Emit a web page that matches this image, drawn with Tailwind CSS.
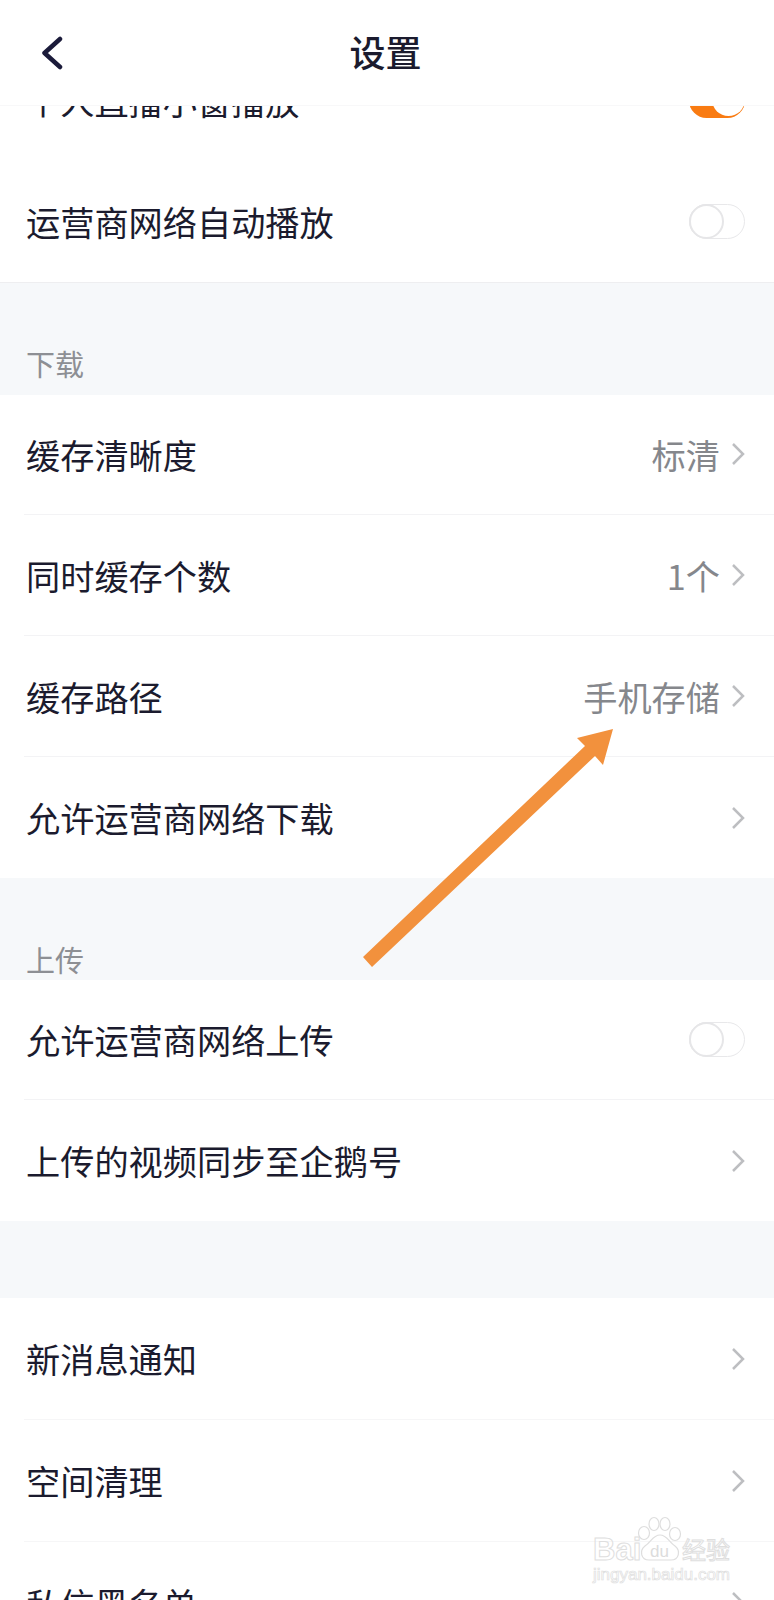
<!DOCTYPE html>
<html lang="zh-CN">
<head>
    <meta charset="UTF-8">
    <meta name="viewport" content="width=device-width, initial-scale=1.0">
    <title>设置</title>
    <script src="https://cdn.jsdelivr.net/npm/@tailwindcss/browser@4"></script>
</head>
<body class="bg-white font-['Noto_Sans_CJK_SC',sans-serif] text-[#1b1b2e]">
<div class="relative w-[774px] h-[1600px] overflow-hidden">

    <header class="relative z-10 h-[106px] bg-white border-b border-[#f8f8f9] flex items-center justify-center">
        <svg class="absolute left-[40px] top-[36px]" width="24" height="34" viewBox="0 0 24 34" fill="none">
            <path d="M20 3 L4.500 17 L20 31" stroke="#1b1b3a" stroke-width="4.500" stroke-linecap="round" stroke-linejoin="round"/>
        </svg>
        <h1 class="text-[36px] font-medium leading-none -mt-[4px] -ml-[3px]">设置</h1>
    </header>

    <main class="-mt-[66px]">
        <!-- Playback -->
        <section class="bg-white">
            <div class="h-[121px] pl-[26px] pr-[29px] flex items-center justify-between">
                <span class="text-[34.200px] leading-none">个人直播小窗播放</span>
                <span class="relative w-[56px] h-[35px] rounded-full bg-[#f97b12]">
                    <span class="absolute right-0 top-0 w-[33px] h-[33px] rounded-full bg-white"></span>
                </span>
            </div>
            <div class="h-[122px] pl-[26px] pr-[29px] flex items-center justify-between border-b border-[#eeeef0]">
                <span class="text-[34.200px] leading-none">运营商网络自动播放</span>
                <span class="relative w-[56px] h-[35px] rounded-full border border-[#e8e8ea] bg-white">
                    <span class="absolute -left-px -top-px w-[35px] h-[35px] rounded-full border-2 border-[#e6e6e8] bg-white"></span>
                </span>
            </div>
        </section>

        <!-- Download -->
        <div class="h-[112px] bg-[#f6f8fa] pl-[26px] pb-[17px] flex items-end">
            <span class="text-[29px] leading-none text-[#8d8f94]">下载</span>
        </div>
        <section class="bg-white">
            <div class="h-[120px] ml-[24px] pl-[2px] pr-[29px] flex items-center justify-between border-b border-[#f3f3f5]">
                <span class="text-[34.200px] leading-none">缓存清晰度</span>
                <span class="flex items-center gap-[11px]">
                    <span class="text-[34.200px] leading-none text-[#85878c]">标清</span>
                    <svg width="14" height="24" viewBox="0 0 14 24" fill="none"><path d="M2 2 L12 12 L2 22" stroke="#bdbec1" stroke-width="2.500"/></svg>
                </span>
            </div>
            <div class="h-[121px] ml-[24px] pl-[2px] pr-[29px] flex items-center justify-between border-b border-[#f3f3f5]">
                <span class="text-[34.200px] leading-none">同时缓存个数</span>
                <span class="flex items-center gap-[11px]">
                    <span class="text-[34.200px] leading-none text-[#85878c]">1个</span>
                    <svg width="14" height="24" viewBox="0 0 14 24" fill="none"><path d="M2 2 L12 12 L2 22" stroke="#bdbec1" stroke-width="2.500"/></svg>
                </span>
            </div>
            <div class="h-[121px] ml-[24px] pl-[2px] pr-[29px] flex items-center justify-between border-b border-[#f3f3f5]">
                <span class="text-[34.200px] leading-none">缓存路径</span>
                <span class="flex items-center gap-[11px]">
                    <span class="text-[34.200px] leading-none text-[#85878c]">手机存储</span>
                    <svg width="14" height="24" viewBox="0 0 14 24" fill="none"><path d="M2 2 L12 12 L2 22" stroke="#bdbec1" stroke-width="2.500"/></svg>
                </span>
            </div>
            <div class="h-[121px] ml-[24px] pl-[2px] pr-[29px] flex items-center justify-between">
                <span class="text-[34.200px] leading-none">允许运营商网络下载</span>
                <svg width="14" height="24" viewBox="0 0 14 24" fill="none"><path d="M2 2 L12 12 L2 22" stroke="#bdbec1" stroke-width="2.500"/></svg>
            </div>
        </section>

        <!-- Upload -->
        <div class="h-[102px] bg-[#f6f8fa] pl-[26px] pb-[6px] flex items-end">
            <span class="text-[29px] leading-none text-[#8d8f94]">上传</span>
        </div>
        <section class="bg-white">
            <div class="h-[120px] ml-[24px] pl-[2px] pr-[29px] flex items-center justify-between border-b border-[#f3f3f5]">
                <span class="text-[34.200px] leading-none">允许运营商网络上传</span>
                <span class="relative w-[56px] h-[35px] rounded-full border border-[#e8e8ea] bg-white">
                    <span class="absolute -left-px -top-px w-[35px] h-[35px] rounded-full border-2 border-[#e6e6e8] bg-white"></span>
                </span>
            </div>
            <div class="h-[121px] ml-[24px] pl-[2px] pr-[29px] flex items-center justify-between">
                <span class="text-[34.200px] leading-none">上传的视频同步至企鹅号</span>
                <svg width="14" height="24" viewBox="0 0 14 24" fill="none"><path d="M2 2 L12 12 L2 22" stroke="#bdbec1" stroke-width="2.500"/></svg>
            </div>
        </section>

        <div class="h-[77px] bg-[#f6f8fa]"></div>

        <!-- Other -->
        <section class="bg-white">
            <div class="h-[122px] ml-[24px] pl-[2px] pr-[29px] flex items-center justify-between border-b border-[#f6f6f7]">
                <span class="text-[34.200px] leading-none">新消息通知</span>
                <svg width="14" height="24" viewBox="0 0 14 24" fill="none"><path d="M2 2 L12 12 L2 22" stroke="#bdbec1" stroke-width="2.500"/></svg>
            </div>
            <div class="h-[122px] ml-[24px] pl-[2px] pr-[29px] flex items-center justify-between border-b border-[#f6f6f7]">
                <span class="text-[34.200px] leading-none">空间清理</span>
                <svg width="14" height="24" viewBox="0 0 14 24" fill="none"><path d="M2 2 L12 12 L2 22" stroke="#bdbec1" stroke-width="2.500"/></svg>
            </div>
            <div class="h-[122px] ml-[24px] pl-[2px] pr-[29px] flex items-center justify-between">
                <span class="text-[34.200px] leading-none">私信黑名单</span>
                <svg width="14" height="24" viewBox="0 0 14 24" fill="none"><path d="M2 2 L12 12 L2 22" stroke="#bdbec1" stroke-width="2.500"/></svg>
            </div>
        </section>
    </main>

    <!-- Annotation arrow drawn on top of the screenshot -->
    <svg class="absolute left-0 top-0 z-20 pointer-events-none" width="774" height="1600" viewBox="0 0 774 1600">
        <polygon points="363,957 585,746 577,738 613,729 603,765 595,756 372,967" fill="#f2913d"/>
    </svg>

    <!-- Watermark -->
    <div class="absolute left-[593px] top-[1516px] z-20 w-[140px] h-[70px] pointer-events-none">
        <svg class="absolute left-[43px] top-0" width="48" height="46" viewBox="0 0 48 46" fill="none" stroke="#dedede" stroke-width="1.200">
            <ellipse cx="8" cy="17" rx="5.500" ry="6.500"/>
            <ellipse cx="18" cy="8" rx="5" ry="6.500"/>
            <ellipse cx="29" cy="8" rx="5" ry="6.500"/>
            <ellipse cx="39" cy="18" rx="5.500" ry="6.500"/>
            <path d="M24 19 C17 19 15 26 9 30 C3 35 5 44 13 44 L35 44 C43 44 45 35 39 30 C33 26 31 19 24 19 Z"/>
        </svg>
        <span class="absolute left-0 top-[18px] text-[31px] leading-none font-bold font-['Liberation_Sans',sans-serif] text-transparent [-webkit-text-stroke:1px_#dedede]">Bai</span>
        <span class="absolute left-[57px] top-[27px] text-[17px] leading-none font-['Liberation_Sans',sans-serif] text-[#dcdcdc]">du</span>
        <span class="absolute left-[89px] top-[21px] text-[24px] leading-none text-transparent [-webkit-text-stroke:1px_#dedede]">经验</span>
        <span class="absolute left-0 top-[50px] text-[17px] leading-none font-['Liberation_Sans',sans-serif] text-transparent [-webkit-text-stroke:0.700px_#dedede]">jingyan.baidu.com</span>
    </div>
</div>
</body>
</html>
